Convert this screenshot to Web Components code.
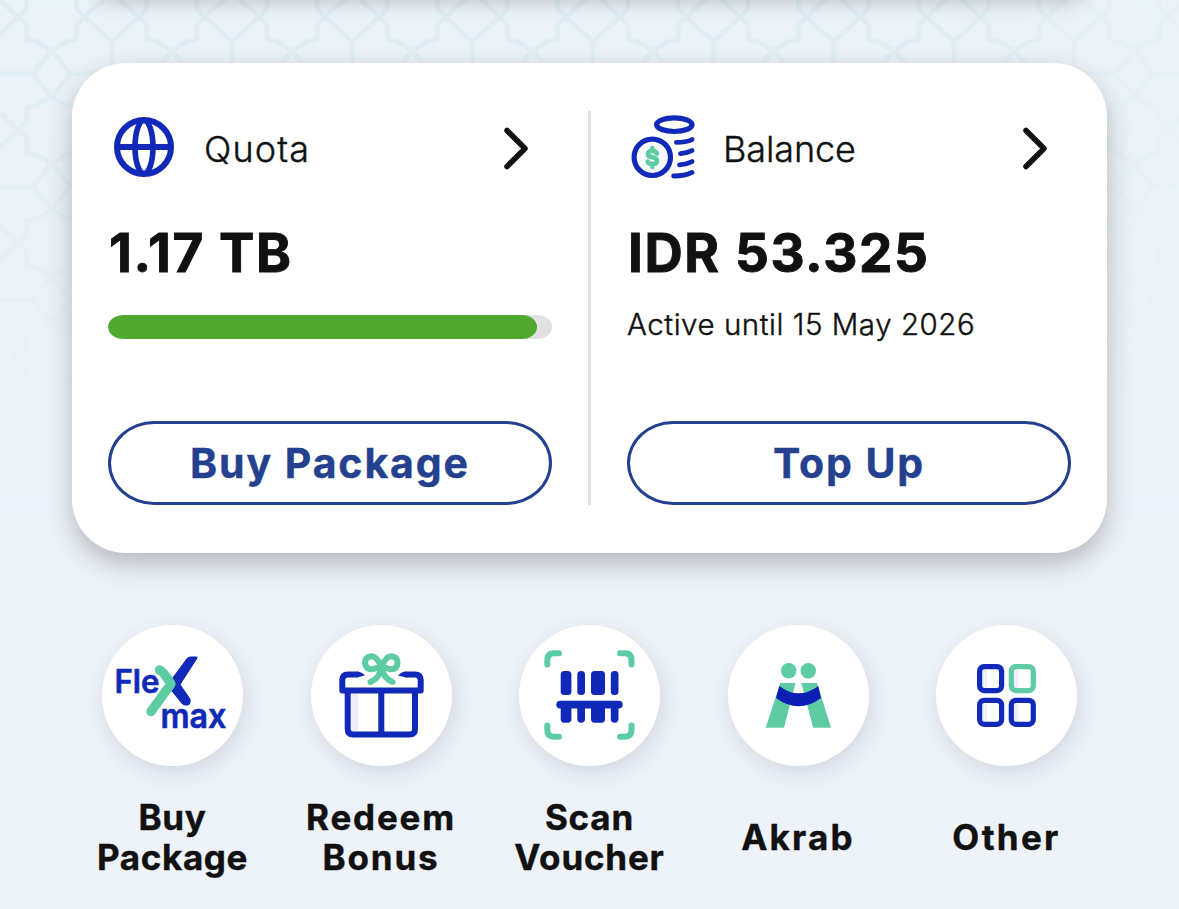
<!DOCTYPE html>
<html lang="en">
<head>
	<meta charset="UTF-8">
	<title>My account</title>
	<style>
		body {
			margin: 0;
			font-family: Inter, "Liberation Sans", sans-serif;
			color: #111;
		}
	</style>
</head>
<body>

<account-page>
	<balance-card>
		<account-panel label="Quota" value="1.17 TB" action="Buy Package" style="--label-gap: 1.1px; --value-gap: 1.6px; --action-gap: 1.9px">
			<app-icon slot="icon" name="globe"></app-icon>
			<quota-bar></quota-bar>
		</account-panel>
		<account-panel label="Balance" value="IDR 53.325" action="Top Up" style="--label-gap: -.1px; --value-gap: 1.6px; --action-gap: 1.9px">
			<app-icon slot="icon" name="coins"></app-icon>
			<active-until>Active until 15 May 2026</active-until>
		</account-panel>
	</balance-card>
	<shortcut-list>
		<shortcut-item icon="flexmax" style="--gap: .6px">Buy<br>Package</shortcut-item>
		<shortcut-item icon="gift" style="--gap: 1.8px">Redeem<br>Bonus</shortcut-item>
		<shortcut-item icon="scan" style="--gap: .8px">Scan<br>Voucher</shortcut-item>
		<shortcut-item icon="akrab" style="--gap: 2.2px">Akrab</shortcut-item>
		<shortcut-item icon="other" style="--gap: 2.3px">Other</shortcut-item>
	</shortcut-list>
</account-page>

<script>
	const blue  = '#1029b8';
	const green = '#5dcca3';

	const icons = {
		globe: [64, 64, `
			<g fill="none" stroke="${blue}" stroke-width="6">
				<circle cx="32" cy="32" r="27"/>
				<ellipse cx="32" cy="32" rx="9" ry="26.5" stroke-width="5.6"/>
				<path d="M5 32H59"/>
			</g>`],
		coins: [64, 64, `
			<g fill="none" stroke="${blue}" stroke-width="5.2" stroke-linecap="round">
				<circle cx="21.3" cy="42.3" r="18.2" fill="#f8f9ff"/>
				<ellipse cx="43.3" cy="9.7" rx="17.7" ry="6.8"/>
				<path d="M45.4 27.4Q55 27.4 61 24.6M49.5 38.6Q56 38 61 35.6M48.5 49.8Q56 49.2 61 46.6M42.6 61Q54 61 61 57.4" stroke-width="4.8"/>
				<path stroke="${green}" stroke-width="4.6" d="M26 38.7Q25 36 21.3 36Q17 36 17 39Q17 41.7 21.3 42.3Q26 43 26 46Q26 49 21.3 49Q17.6 49 16.7 46.7M21.3 33V36M21.3 49V52"/>
			</g>`],
		flexmax: [141, 141, `
			<text x="12.5" y="68" font-size="32" font-weight="600" fill="${blue}" stroke="${blue}" stroke-width=".6" textLength="45" lengthAdjust="spacingAndGlyphs">Fle</text>
			<text x="58.5" y="102.5" font-size="34" font-weight="600" fill="${blue}" stroke="${blue}" stroke-width=".6" textLength="66" lengthAdjust="spacingAndGlyphs">max</text>
			<path fill="${blue}" d="M85 33Q86.5 31.5 88.5 31.5H94Q96.500 31.5 95 34L78.5 59.5L88.5 74Q89.5 79.5 85.5 80.5Q82 81 80 79L67 63L68 56Z"/>
			<path fill="none" stroke="${green}" stroke-width="9.4" stroke-linecap="round" stroke-linejoin="round" d="M57.5 45Q61.5 46.5 69 59L49 86.5"/>`],
		gift: [141, 141, `
			<path fill="#eceffb" d="M40 69H47V107H40Z"/>
			<g fill="none" stroke="${blue}" stroke-width="6" stroke-linejoin="round">
				<path d="M36.7 67V104Q36.7 109.5 42 109.5H98.5Q104 109.5 104 104V67M70.3 66V109"/>
				<path d="M47 49.5H37Q31.3 49.5 31.3 55V65.5H109.7V55Q109.7 49.5 104 49.5H94"/>
			</g>
			<path fill="${blue}" d="M46 46.5Q50 46.5 54 50.5Q50 51.5 46 52.5ZM95 46.5Q91 46.5 87 50.5Q91 51.5 95 52.5Z"/>
			<path fill="none" stroke="${green}" stroke-width="6" stroke-linecap="round" stroke-linejoin="round" d="M70.3 42Q66 31 60 31.3Q54 32 54 38Q55 44.5 61 44.3Q66 43 70.3 42Q75 31 80.5 31.3Q86.5 32 86.5 38Q86 44.5 80 44.3Q75 43 70.3 42Q69 53 59.5 57M70.3 42Q72 53 81.5 57"/>`],
		scan: [141, 141, `
			<path fill="none" stroke="${green}" stroke-width="6" stroke-linecap="round" d="M28.3 39.5V35Q28.3 28.3 35 28.3H40M101 28.3H106Q112.5 28.3 112.5 35V39.5M28.3 100.5V105Q28.3 111.7 35 111.7H40M101 111.7H106Q112.5 111.7 112.5 105V100.5"/>
			<g fill="${blue}">
				<rect x="41.7" y="46" width="10.7" height="24" rx="3.5"/>
				<rect x="58.3" y="46" width="7.7" height="24" rx="3.5"/>
				<rect x="72" y="46" width="14" height="24" rx="3.5"/>
				<rect x="91.8" y="46" width="7.7" height="24" rx="3.5"/>
				<rect x="37.3" y="75.7" width="66.4" height="7.8" rx="3.9"/>
				<path d="M41.7 80H52.4V94Q52.4 97.7 49 97.7H45Q41.7 97.7 41.7 94ZM58.3 80H66V94Q66 97.7 62.1 97.7Q58.3 97.7 58.3 94ZM72 80H86V94Q86 97.7 82.5 97.7H75.5Q72 97.7 72 94ZM91.8 80H99.5V94Q99.5 97.7 95.6 97.7Q91.8 97.7 91.8 94Z"/>
			</g>`],
		akrab: [141, 141, `
			<g fill="${green}">
				<circle cx="60.7" cy="45.7" r="7.7"/>
				<circle cx="80.3" cy="45.7" r="7.7"/>
				<path d="M52.3 58H67.5L56 102.7H37.7ZM73.3 58H89L103 102.7H85.2Z"/>
			</g>
			<path fill="#0b1fb5" d="M51.3 61Q70.7 75.7 90.3 61L93 73Q70.7 89.7 48 73Z"/>`],
		other: [141, 141, `
			<g fill="none" stroke="${blue}" stroke-width="5.2">
				<path fill="#eceffb" stroke="none" d="M46 45H51V63H46ZM77.5 45H82.5V63H77.5ZM46 79H51V97H46ZM77.5 79H82.5V97H77.5Z"/>
				<rect x="43.6" y="41.6" width="22" height="24" rx="4.5"/>
				<rect x="75.3" y="41.6" width="22" height="24" rx="4.5" stroke="${green}"/>
				<rect x="43.6" y="75.3" width="22" height="24" rx="4.5"/>
				<rect x="75.3" y="75.3" width="22" height="24" rx="4.5"/>
			</g>`],
	};

	class AppIcon extends HTMLElement
	{
		constructor() {
			super();
			this.attachShadow({mode: 'open'});
		}

		connectedCallback() {
			const [width, height, shapes] = icons[this.getAttribute('name')];

			this.shadowRoot.innerHTML = `
				<style>
					:host { display: block; flex: none; }
					svg { display: block; }
				</style>
				<svg width="${width}" height="${height}" viewBox="0 0 ${width} ${height}">${shapes}</svg>`;
		}
	}

	class AccountPage extends HTMLElement
	{
		constructor() {
			super();
			this.attachShadow({mode: 'open'}).innerHTML = `
				<style>
					:host {
						display: grid;
						width: 1179px;
						height: 909px;
						overflow: hidden;
						background: linear-gradient(#eaf3f8, #ebf3f8 35%, #edf3fa 55%, #eef3fa);
					}
					.pattern, main { grid-area: 1 / 1; }
					.pattern { display: block; }
					main {
						display: flex;
						flex-direction: column;
						align-items: center;
						padding-top: 63px;
						z-index: 1;
					}
					/* shadow of the banner that ends above the page */
					.banner {
						grid-area: 1 / 1;
						width: 980px;
						height: 20px;
						margin: -21px auto 0;
						box-shadow: 0 0 22px rgba(0, 0, 0, .26);
					}
				</style>
				<svg class="pattern" width="1179" height="500">
					<defs>
						<pattern id="stars" x="-8.5" y="-39.5" width="120.3" height="113" patternUnits="userSpaceOnUse">
							<g fill="none" stroke="#d3e7f1" stroke-width="4.5" stroke-linejoin="round">
								<path d="M93 56.5L85 65V79L75 81L60 90L45 81L35 79V65L27 56.5L35 48V34L45 32L60 23L75 32L85 34V48Z"/>
								<path d="M93 56.5L120.3 81V113M93 56.5L120.3 32V0M27 56.5L0 81V113M27 56.5L0 32V0"/>
								<path d="M60 90L79 113H120.3M60 90L41 113H0M60 23L79 0H120.3M60 23L41 0H0"/>
							</g>
						</pattern>
						<linearGradient id="fade" x2="0" y2="1">
							<stop offset="0" stop-color="#fff" stop-opacity=".5"/>
							<stop offset=".35" stop-color="#fff" stop-opacity=".35"/>
							<stop offset=".8" stop-color="#fff" stop-opacity="0"/>
						</linearGradient>
						<linearGradient id="side">
							<stop offset=".8" stop-color="#ebf4f9" stop-opacity="0"/>
							<stop offset="1" stop-color="#ebf4f9" stop-opacity=".6"/>
						</linearGradient>
						<mask id="mask"><rect width="1179" height="500" fill="url(#fade)"/></mask>
					</defs>
					<g mask="url(#mask)">
						<rect width="1179" height="500" fill="url(#stars)"/>
						<rect width="1179" height="500" fill="url(#side)"/>
					</g>
				</svg>
				<div class="banner"></div>
				<main><slot></slot></main>`;
		}
	}

	class BalanceCard extends HTMLElement
	{
		constructor() {
			super();
			this.attachShadow({mode: 'open'}).innerHTML = `
				<style>
					:host {
						display: grid;
						grid-template-columns: 444px 444px;
						column-gap: 75px;
						box-sizing: border-box;
						width: 1035px;
						height: 490px;
						padding: 48px 36px;
						border-radius: 54px;
						/* divider between the two panels */
						background: linear-gradient(#e1e1e1, #e1e1e1) 516px 48px / 3px 394px no-repeat #fff;
						box-shadow: 0 11px 27px rgba(0, 0, 0, .24);
					}
				</style>
				<slot></slot>`;
		}
	}

	class AccountPanel extends HTMLElement
	{
		constructor() {
			super();
			this.attachShadow({mode: 'open'});
		}

		connectedCallback() {
			this.shadowRoot.innerHTML = `
				<style>
					:host { display: flex; flex-direction: column; }
					header {
						display: flex;
						align-items: center;
						height: 72px;
						padding: 0 23px 0 4px;
					}
					.label {
						flex: 1;
						margin-left: 28px;
						padding-top: 3px;
						font-size: 36px;
						font-weight: 300;
						letter-spacing: var(--label-gap);
						-webkit-text-stroke: .4px;
					}
					.chevron {
						flex: none;
						margin-top: 2px;
					}
					.value {
						height: 72px;
						margin-top: 33px;
						padding-left: 1px;
						font-size: 53px;
						font-weight: 700;
						line-height: 74px;
						letter-spacing: var(--value-gap);
						white-space: nowrap;
						-webkit-text-stroke: .9px;
					}
					button {
						height: 84px;
						margin-top: auto;
						padding: 0;
						border: 3px solid #24418f;
						border-radius: 46px / 42px;
						background: #fff;
						color: #24418f;
						font: 700 41px/79px Inter, "Liberation Sans", sans-serif;
						letter-spacing: var(--action-gap);
						-webkit-text-stroke: .4px;
					}
				</style>
				<header>
					<slot name="icon"></slot>
					<span class="label">${this.getAttribute('label')}</span>
					<svg class="chevron" width="26" height="44" viewBox="0 0 26 44">
						<path d="M4 4.5L22 22.5L4 40.5" fill="none" stroke="#111" stroke-width="5.5" stroke-linecap="round" stroke-linejoin="round"/>
					</svg>
				</header>
				<div class="value">${this.getAttribute('value')}</div>
				<slot></slot>
				<button type="button">${this.getAttribute('action')}</button>`;
		}
	}

	class QuotaBar extends HTMLElement
	{
		constructor() {
			super();
			this.attachShadow({mode: 'open'}).innerHTML = `
				<style>
					:host {
						display: block;
						height: 24px;
						margin-top: 27px;
						border-radius: 15px / 12px;
						background: #e1e1e1;
						overflow: hidden;
					}
					div {
						width: 429px;
						height: 100%;
						border-radius: 15px / 12px;
						background: #50a82f;
					}
				</style>
				<div></div>`;
		}
	}

	class ActiveUntil extends HTMLElement
	{
		constructor() {
			super();
			this.attachShadow({mode: 'open'}).innerHTML = `
				<style>
					:host {
						display: block;
						margin-top: 18px;
						font-size: 29.5px;
						font-weight: 300;
						line-height: 36px;
						letter-spacing: .54px;
						white-space: nowrap;
						-webkit-text-stroke: .4px;
					}
				</style>
				<slot></slot>`;
		}
	}

	class ShortcutList extends HTMLElement
	{
		constructor() {
			super();
			this.attachShadow({mode: 'open'}).innerHTML = `
				<style>
					:host {
						display: grid;
						grid-template-columns: repeat(5, 208.5px);
						margin-top: 72px;
					}
				</style>
				<slot></slot>`;
		}
	}

	class ShortcutItem extends HTMLElement
	{
		constructor() {
			super();
			this.attachShadow({mode: 'open'});
		}

		connectedCallback() {
			this.shadowRoot.innerHTML = `
				<style>
					:host {
						display: flex;
						flex-direction: column;
						align-items: center;
					}
					app-icon {
						border-radius: 50%;
						background: #fff;
						box-shadow: 3px 7px 20px rgba(40, 50, 80, .14);
					}
					.label {
						display: flex;
						align-items: center;
						height: 80px;
						margin-top: 31px;
						font-size: 35px;
						font-weight: 700;
						line-height: 40px;
						letter-spacing: var(--gap);
						text-align: center;
						-webkit-text-stroke: .4px;
					}
				</style>
				<app-icon name="${this.getAttribute('icon')}"></app-icon>
				<div class="label"><div><slot></slot></div></div>`;
		}
	}

	customElements.define('app-icon', AppIcon);
	customElements.define('account-page', AccountPage);
	customElements.define('balance-card', BalanceCard);
	customElements.define('account-panel', AccountPanel);
	customElements.define('quota-bar', QuotaBar);
	customElements.define('active-until', ActiveUntil);
	customElements.define('shortcut-list', ShortcutList);
	customElements.define('shortcut-item', ShortcutItem);
</script>

</body>
</html>
